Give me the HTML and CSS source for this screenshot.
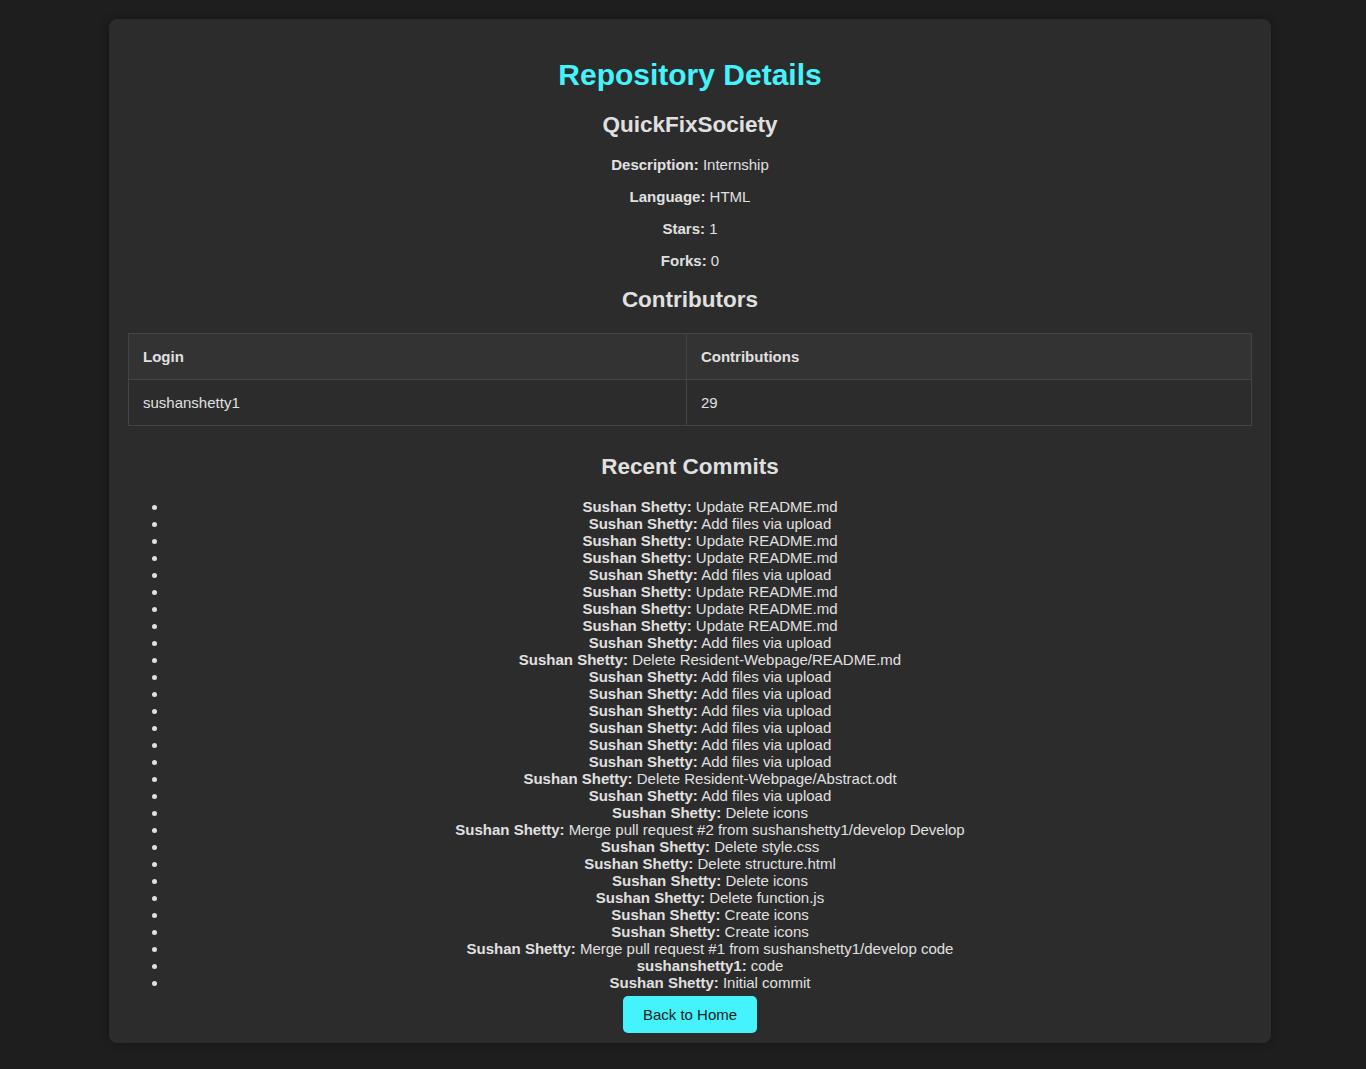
FILE: index.html
```html
<!DOCTYPE html>
<html lang="en">
<head>
<meta charset="UTF-8">
<title>Repository Details</title>
<link rel="stylesheet" href="styles.css">
</head>
<body>
<div class="container">
  <h1>Repository Details</h1>
  <h2>QuickFixSociety</h2>
  <p><strong>Description:</strong> Internship</p>
  <p><strong>Language:</strong> HTML</p>
  <p><strong>Stars:</strong> 1</p>
  <p><strong>Forks:</strong> 0</p>
  <h2>Contributors</h2>
  <table>
    <thead>
      <tr><th>Login</th><th>Contributions</th></tr>
    </thead>
    <tbody>
      <tr><td>sushanshetty1</td><td>29</td></tr>
    </tbody>
  </table>
  <h2>Recent Commits</h2>
  <ul class="commits">
    <li><strong>Sushan Shetty:</strong> Update README.md</li>
    <li><strong>Sushan Shetty:</strong> Add files via upload</li>
    <li><strong>Sushan Shetty:</strong> Update README.md</li>
    <li><strong>Sushan Shetty:</strong> Update README.md</li>
    <li><strong>Sushan Shetty:</strong> Add files via upload</li>
    <li><strong>Sushan Shetty:</strong> Update README.md</li>
    <li><strong>Sushan Shetty:</strong> Update README.md</li>
    <li><strong>Sushan Shetty:</strong> Update README.md</li>
    <li><strong>Sushan Shetty:</strong> Add files via upload</li>
    <li><strong>Sushan Shetty:</strong> Delete Resident-Webpage/README.md</li>
    <li><strong>Sushan Shetty:</strong> Add files via upload</li>
    <li><strong>Sushan Shetty:</strong> Add files via upload</li>
    <li><strong>Sushan Shetty:</strong> Add files via upload</li>
    <li><strong>Sushan Shetty:</strong> Add files via upload</li>
    <li><strong>Sushan Shetty:</strong> Add files via upload</li>
    <li><strong>Sushan Shetty:</strong> Add files via upload</li>
    <li><strong>Sushan Shetty:</strong> Delete Resident-Webpage/Abstract.odt</li>
    <li><strong>Sushan Shetty:</strong> Add files via upload</li>
    <li><strong>Sushan Shetty:</strong> Delete icons</li>
    <li><strong>Sushan Shetty:</strong> Merge pull request #2 from sushanshetty1/develop Develop</li>
    <li><strong>Sushan Shetty:</strong> Delete style.css</li>
    <li><strong>Sushan Shetty:</strong> Delete structure.html</li>
    <li><strong>Sushan Shetty:</strong> Delete icons</li>
    <li><strong>Sushan Shetty:</strong> Delete function.js</li>
    <li><strong>Sushan Shetty:</strong> Create icons</li>
    <li><strong>Sushan Shetty:</strong> Create icons</li>
    <li><strong>Sushan Shetty:</strong> Merge pull request #1 from sushanshetty1/develop code</li>
    <li><strong>sushanshetty1:</strong> code</li>
    <li><strong>Sushan Shetty:</strong> Initial commit</li>
  </ul>
  <div class="actions"><a class="btn" href="#">Back to Home</a></div>
</div>
</body>
</html>
```

FILE: styles.css
```css
html {
  background: #1e1e1e;
}
body {
  margin: 0;
  padding: 19px 95px 26px 109px;
  background: #1e1e1e;
  color: #e0e0e0;
  font-family: "Liberation Sans", Arial, sans-serif;
  font-size: 15px;
}
.container {
  background: #2c2c2c;
  border-radius: 8px;
  padding: 20px 19px 20px 19px;
  text-align: center;
  box-shadow: 0 0 10px rgba(0, 0, 0, 0.3);
}
h1 {
  color: #45f3ff;
  font-size: 30px;
  margin: 19px 0 20px;
}
h2 {
  font-size: 22.5px;
  margin: 18px 0;
}
p {
  margin: 15px 0;
}
table {
  width: 100%;
  border-collapse: collapse;
  text-align: left;
  margin: 20px 0 28px;
}
th, td {
  border: 1px solid #444;
  padding: 14px 14px;
}
th {
  background: #333;
  font-weight: bold;
}
.commits {
  margin: 15px 0;
  padding-left: 40px;
}
.commits li {
  text-align: center;
}
.btn {
  background: #45f3ff;
  color: #1e1e1e;
  text-decoration: none;
  padding: 10px 20px;
  border-radius: 5px;
}
```
